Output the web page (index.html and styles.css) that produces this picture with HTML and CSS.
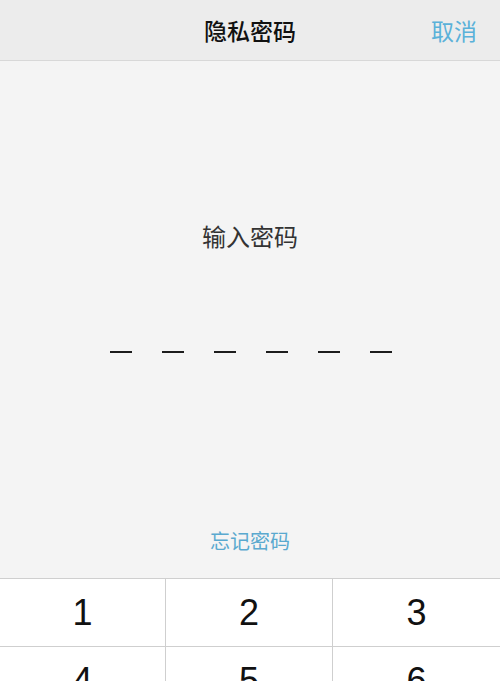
FILE: index.html
```html
<!DOCTYPE html>
<html lang="zh">
<head>
<meta charset="utf-8">
<link rel="stylesheet" href="styles.css">
</head>
<body>
<div class="screen">
  <header class="nav">
    <div class="nav-title">隐私密码</div>
    <div class="nav-cancel">取消</div>
  </header>
  <main class="content">
    <div class="prompt">输入密码</div>
    <div class="dashes">
      <span class="dash"></span><span class="dash"></span><span class="dash"></span><span class="dash"></span><span class="dash"></span><span class="dash"></span>
    </div>
    <div class="forgot">忘记密码</div>
  </main>
  <section class="keypad">
    <div class="key">1</div>
    <div class="key">2</div>
    <div class="key">3</div>
    <div class="key">4</div>
    <div class="key">5</div>
    <div class="key">6</div>
  </section>
</div>
</body>
</html>
```
FILE: styles.css
```css
html, body {
  margin: 0;
  padding: 0;
  background: #f4f4f4;
}
.screen {
  width: 500px;
  height: 681px;
  overflow: hidden;
  display: flex;
  flex-direction: column;
  font-family: "Noto Sans CJK SC", "Noto Sans", sans-serif;
}
.nav {
  height: 60px;
  flex: none;
  background: #ececec;
  border-bottom: 1px solid #d8d8d8;
  display: flex;
  align-items: center;
  justify-content: center;
  position: relative;
}
.nav-title {
  font-size: 23px;
  color: #111;
  font-weight: 500;
}
.nav-cancel {
  position: absolute;
  right: 23px;
  top: 0;
  line-height: 60px;
  font-size: 23px;
  color: #5ab1d9;
}
.content {
  height: 517px;
  flex: none;
  background: #f4f4f4;
  display: flex;
  flex-direction: column;
  align-items: center;
}
.prompt {
  margin-top: 158px;
  font-size: 24px;
  line-height: 34px;
  color: #333;
}
.dashes {
  margin-top: 98px;
  display: flex;
  gap: 30px;
  padding-left: 2px;
}
.dash {
  width: 22px;
  height: 2px;
  background: #1c1c1c;
}
.forgot {
  margin-top: 173px;
  font-size: 20px;
  line-height: 30px;
  color: #5aa9cf;
}
.keypad {
  flex: none;
  display: grid;
  grid-template-columns: 166px 167px 167px;
  grid-auto-rows: 68px;
  background: #fff;
  border-top: 1px solid #cfcfcf;
}
.key {
  display: flex;
  align-items: center;
  justify-content: center;
  font-family: "Liberation Sans", Arial, sans-serif;
  font-size: 36px;
  color: #111;
  border-bottom: 1px solid #cfcfcf;
  border-right: 1px solid #cfcfcf;
}
.key:nth-child(3n) {
  border-right: none;
}
```
